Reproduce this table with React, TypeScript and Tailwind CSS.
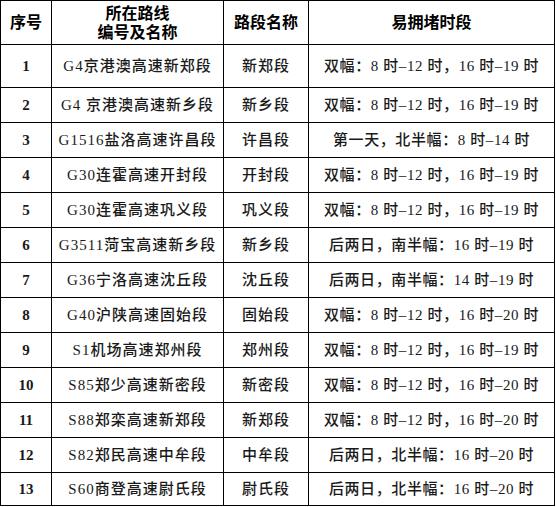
const rows: [string, string, string, string][] = [
  ["1", "G4京港澳高速新郑段", "新郑段", "双幅：8 时–12 时，16 时–19 时"],
  ["2", "G4 京港澳高速新乡段", "新乡段", "双幅：8 时–12 时，16 时–19 时"],
  ["3", "G1516盐洛高速许昌段", "许昌段", "第一天，北半幅：8 时–14 时"],
  ["4", "G30连霍高速开封段", "开封段", "双幅：8 时–12 时，16 时–19 时"],
  ["5", "G30连霍高速巩义段", "巩义段", "双幅：8 时–12 时，16 时–19 时"],
  ["6", "G3511菏宝高速新乡段", "新乡段", "后两日，南半幅：16 时–19 时"],
  ["7", "G36宁洛高速沈丘段", "沈丘段", "后两日，南半幅：14 时–19 时"],
  ["8", "G40沪陕高速固始段", "固始段", "双幅：8 时–12 时，16 时–20 时"],
  ["9", "S1机场高速郑州段", "郑州段", "双幅：8 时–12 时，16 时–19 时"],
  ["10", "S85郑少高速新密段", "新密段", "双幅：8 时–12 时，16 时–20 时"],
  ["11", "S88郑栾高速新郑段", "新郑段", "双幅：8 时–12 时，16 时–20 时"],
  ["12", "S82郑民高速中牟段", "中牟段", "后两日，北半幅：16 时–20 时"],
  ["13", "S60商登高速尉氏段", "尉氏段", "后两日，北半幅：16 时–20 时"],
];

const font = {
  fontFamily: '"Liberation Serif", "Noto Sans CJK SC", serif',
};

export default function App() {
  return (
    <div className="w-[556px] h-[507px] bg-white" style={font}>
      <table className="w-[554px] table-fixed border-collapse text-center text-[#1a1a1a]">
        <colgroup>
          <col className="w-[51px]" />
          <col className="w-[172px]" />
          <col className="w-[85px]" />
          <col className="w-[246px]" />
        </colgroup>
        <thead>
          <tr className="h-[44px] text-[16px] font-bold leading-[19px] text-black">
            <th className="border border-black p-0">序号</th>
            <th className="border border-black p-0">
              所在路线
              <br />
              编号及名称
            </th>
            <th className="border border-black p-0">路段名称</th>
            <th className="border border-black p-0">易拥堵时段</th>
          </tr>
        </thead>
        <tbody className="text-[15px] font-medium">
          {rows.map((r, i) => (
            <tr
              key={r[0]}
              className={i === 0 ? "h-[43px]" : i === rows.length - 1 ? "h-[33px]" : "h-[35px]"}
            >
              <td className="border border-black p-0 font-bold">{r[0]}</td>
              <td className="border border-black p-0 tracking-[1px] whitespace-nowrap">{r[1]}</td>
              <td className="border border-black p-0 tracking-[1px]">{r[2]}</td>
              <td className="border border-black p-0 tracking-[0.6px] whitespace-nowrap">{r[3]}</td>
            </tr>
          ))}
        </tbody>
      </table>
    </div>
  );
}
